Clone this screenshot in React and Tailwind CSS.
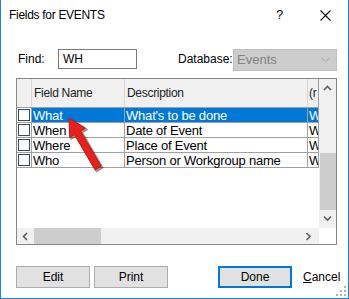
import React from 'react';

const rows = [
  { name: 'What', desc: "What's to be done", extra: 'W', selected: true },
  { name: 'When', desc: 'Date of Event', extra: 'W' },
  { name: 'Where', desc: 'Place of Event', extra: 'W' },
  { name: 'Who', desc: 'Person or Workgroup name', extra: 'W' },
];

function Chevron({ dir }) {
  const pts = {
    up: '1,5 4.5,1.5 8,5',
    down: '1,1.5 4.5,5 8,1.5',
    left: '5,1 1.5,4.5 5,8',
    right: '1.5,1 5,4.5 1.5,8',
  }[dir];
  const vertical = dir === 'up' || dir === 'down';
  return (
    <svg width={vertical ? 9 : 7} height={vertical ? 7 : 9} viewBox={vertical ? '0 0 9 7' : '0 0 7 9'}>
      <polyline points={pts} fill="none" stroke="#606060" strokeWidth="1.6" />
    </svg>
  );
}

function Row({ row }) {
  const cell = row.selected ? 'bg-[#0078d7] text-white' : 'bg-white text-black';
  return (
    <div className="flex h-[15px] border-b border-[#a0a0a0] text-[13px] leading-none tracking-[-0.2px]">
      <div className="w-[15px] shrink-0 border-r border-[#a0a0a0] bg-white flex items-center pl-[1px]">
        <div className="w-[12px] h-[12px] border border-[#3a4a5e] bg-white" />
      </div>
      <div className={`w-[93px] shrink-0 border-r border-[#a0a0a0] flex items-center pl-[1px] ${cell}`}>{row.name}</div>
      <div className={`w-[183px] shrink-0 border-r border-[#a0a0a0] flex items-center pl-[1px] whitespace-nowrap ${cell}`}>{row.desc}</div>
      <div className={`w-[11px] shrink-0 border-r border-[#a0a0a0] flex items-center pl-[1px] overflow-hidden ${cell}`}>{row.extra}</div>
    </div>
  );
}

export default function App() {
  return (
    <div className="relative w-[349px] h-[299px] bg-white border-x border-b border-[#1883d7] overflow-hidden font-['Liberation_Sans',Arial,sans-serif] text-[12px] text-black">
      {/* Title bar */}
      <div className="h-[30px] flex items-center">
        <span className="pl-[8px] tracking-[-0.3px]">Fields for EVENTS</span>
        <span className="ml-auto w-[8px] text-[13px]">?</span>
        <svg className="ml-[36px] mr-[17px]" width="11" height="11" viewBox="0 0 11 11">
          <path d="M0.5 0.5 L10.5 10.5 M10.5 0.5 L0.5 10.5" stroke="#111" strokeWidth="1.1" />
        </svg>
      </div>

      {/* Find / Database row */}
      <div className="mt-[19px] h-[20px] flex items-center">
        <span className="pl-[17px] w-[57px] shrink-0">Find:</span>
        <div className="w-[79px] h-[20px] shrink-0 border border-[#7a7a7a] flex items-center pl-[4px]">WH</div>
        <span className="ml-[41px] w-[55px] shrink-0">Database:</span>
        <div className="w-[104px] h-[22px] mt-[2px] shrink-0 bg-[#cccccc] border border-[#bfbfbf] flex items-center pl-[3px] text-[#838383] text-[13px]">
          <span>Events</span>
          <svg className="ml-auto mr-[6px]" width="9" height="6" viewBox="0 0 9 6">
            <polyline points="0.5,0.8 4.5,4.8 8.5,0.8" fill="none" stroke="#a6a6a6" strokeWidth="1" />
          </svg>
        </div>
      </div>

      {/* Grid */}
      <div className="mt-[9px] ml-[15px] w-[321px] h-[167px] border border-[#828790] flex flex-col">
        <div className="flex h-[149px]">
          <div className="w-[302px] bg-white">
            <div className="flex h-[29px] border-b border-[#a0a0a0] bg-[#f0f0f0] tracking-[-0.3px]">
              <div className="w-[15px] shrink-0 border-r border-[#d6d6d6]" />
              <div className="w-[93px] shrink-0 border-r border-[#d6d6d6] flex items-center pl-[2px] text-[#222]">Field Name</div>
              <div className="w-[183px] shrink-0 border-r border-[#d6d6d6] flex items-center pl-[2px] text-[#222]">Description</div>
              <div className="w-[11px] shrink-0 border-r border-[#a0a0a0] flex items-center pl-[1px] overflow-hidden text-[#222]">(r</div>
            </div>
            {rows.map((r) => (
              <Row key={r.name} row={r} />
            ))}
          </div>
          <div className="w-[17px] bg-[#f0f0f0] flex flex-col items-center">
            <div className="h-[14px] mt-[2px] flex items-center">
              <Chevron dir="up" />
            </div>
            <div className="mt-[58px] w-[16px] h-[57px] bg-[#cdcdcd]" />
            <div className="mt-[5px] flex items-center">
              <Chevron dir="down" />
            </div>
          </div>
        </div>
        <div className="flex h-[16px]">
          <div className="w-[302px] bg-[#f0f0f0] flex items-center">
            <div className="w-[17px] flex justify-center">
              <Chevron dir="left" />
            </div>
            <div className="w-[67px] h-[16px] bg-[#cdcdcd]" />
            <div className="ml-auto w-[17px] flex justify-center mr-[2px]">
              <Chevron dir="right" />
            </div>
          </div>
          <div className="w-[17px] bg-white" />
        </div>
      </div>

      {/* Buttons */}
      <div className="mt-[21px] h-[22px] flex items-center">
        <button className="ml-[15px] w-[74px] h-[22px] bg-[#e1e1e1] border border-[#adadad]">Edit</button>
        <button className="ml-[4px] w-[74px] h-[22px] bg-[#e1e1e1] border border-[#adadad]">Print</button>
        <button className="ml-[50px] w-[74px] h-[22px] bg-[#e1e1e1] border-2 border-[#0078d7]">Done</button>
        <span className="ml-[11px]">
          <span className="underline">C</span>ancel
        </span>
      </div>

      {/* Size grip */}
      <svg className="absolute right-[2px] bottom-[2px]" width="10" height="10" viewBox="0 0 10 10">
        <g fill="#b0b0b0">
          <rect x="8" y="0" width="2" height="2" />
          <rect x="4" y="4" width="2" height="2" />
          <rect x="8" y="4" width="2" height="2" />
          <rect x="0" y="8" width="2" height="2" />
          <rect x="4" y="8" width="2" height="2" />
          <rect x="8" y="8" width="2" height="2" />
        </g>
      </svg>

      {/* Red annotation arrow */}
      <svg className="absolute left-0 top-0 pointer-events-none" width="349" height="299" viewBox="0 0 349 299">
        <polygon
          points="69.5,119.5 85.8,129.7 81,132.5 101.5,167.7 95.5,171.2 75,136 70.2,138.7"
          fill="#3a0000"
          opacity="0.45"
          stroke="#3a0000"
          strokeWidth="2"
          strokeLinejoin="round"
        />
        <polygon
          points="68,118 84.3,128.2 79.5,131 100,166.2 94,169.7 73.5,134.5 68.7,137.2"
          fill="#e8201c"
          stroke="#c81410"
          strokeWidth="1"
          strokeLinejoin="round"
        />
      </svg>
    </div>
  );
}
